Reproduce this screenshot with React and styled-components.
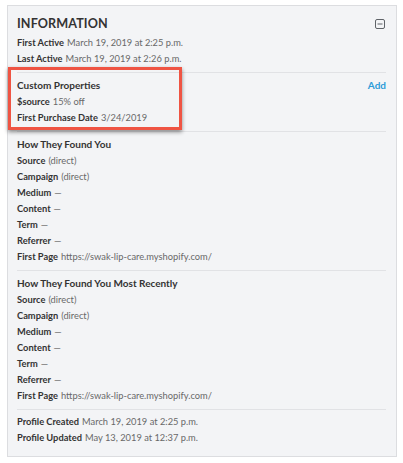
import React from "react";
import styled, { createGlobalStyle } from "styled-components";

const Global = createGlobalStyle`
  html, body {
    margin: 0;
    background: #ffffff;
  }
  body {
    font-family: "Lato", "Liberation Sans", sans-serif;
    -webkit-font-smoothing: antialiased;
  }
`;

const Page = styled.div`
  padding: 5px 6px 0 7px;
`;

const Panel = styled.div`
  position: relative;
  box-sizing: border-box;
  width: 390px;
  height: 452px;
  background: #f3f4f6;
  border: 1px solid #dcdde0;
  padding: 0 10px 0 9px;
`;

const Header = styled.div`
  display: flex;
  align-items: center;
  justify-content: space-between;
  padding-top: 8px;
  height: 20px;
`;

const Title = styled.div`
  font-size: 12.6px;
  font-weight: 700;
  color: #333;
  line-height: 20px;
  letter-spacing: 0.1px;
`;

const Collapse = styled.button`
  display: flex;
  padding: 0;
  margin: 0 1px 0 0;
  border: 0;
  background: none;
  cursor: pointer;
`;

const Section = styled.div`
  padding: ${(p) => (p.top ? "1px 0 5px" : "4px 0 5px")};
  border-top: ${(p) => (p.top ? "none" : "1px solid #e1e2e5")};
`;

const HeadRow = styled.div`
  display: flex;
  justify-content: space-between;
  align-items: baseline;
  height: 17px;
  line-height: 17px;
`;

const Heading = styled.div`
  font-size: 10px;
  font-weight: 700;
  color: #333;
`;

const AddLink = styled.a`
  font-size: 10px;
  font-weight: 700;
  color: #2d9bd8;
  text-decoration: none;
  cursor: pointer;
`;

const Row = styled.div`
  font-size: 9.3px;
  line-height: 16px;
  height: 16px;
  color: #686868;
  white-space: nowrap;
`;

const Label = styled.span`
  font-weight: 700;
  color: #333;
  margin-right: 3px;
`;

const Highlight = styled.div`
  position: absolute;
  left: 0px;
  top: 61px;
  width: 168px;
  height: 57px;
  border: 3px solid #ef5443;
  box-shadow: 0 2px 4px rgba(0, 0, 0, 0.45);
  pointer-events: none;
`;

const source = [
  ["Source", "(direct)"],
  ["Campaign", "(direct)"],
  ["Medium", "—"],
  ["Content", "—"],
  ["Term", "—"],
  ["Referrer", "—"],
  ["First Page", "https://swak-lip-care.myshopify.com/"],
];

function Field({ label, children }) {
  return (
    <Row>
      <Label>{label}</Label>
      {children}
    </Row>
  );
}

function MinusBox() {
  return (
    <svg width="10" height="10" viewBox="0 0 10 10">
      <rect x="0.5" y="0.5" width="9" height="9" rx="1.5" fill="none" stroke="#5f6368" strokeWidth="1" />
      <line x1="2.5" y1="5" x2="7.5" y2="5" stroke="#5f6368" strokeWidth="1" />
    </svg>
  );
}

export default function App() {
  return (
    <Page>
      <Global />
      <Panel>
        <Header>
          <Title>INFORMATION</Title>
          <Collapse aria-label="Collapse">
            <MinusBox />
          </Collapse>
        </Header>
        <Section top>
          <Field label="First Active">March 19, 2019 at 2:25 p.m.</Field>
          <Field label="Last Active">March 19, 2019 at 2:26 p.m.</Field>
        </Section>
        <Section>
          <HeadRow>
            <Heading>Custom Properties</Heading>
            <AddLink>Add</AddLink>
          </HeadRow>
          <Field label="$source">15% off</Field>
          <Field label="First Purchase Date">3/24/2019</Field>
        </Section>
        <Section>
          <HeadRow>
            <Heading>How They Found You</Heading>
          </HeadRow>
          {source.map(([k, v]) => (
            <Field key={k} label={k}>{v}</Field>
          ))}
        </Section>
        <Section>
          <HeadRow>
            <Heading>How They Found You Most Recently</Heading>
          </HeadRow>
          {source.map(([k, v]) => (
            <Field key={k} label={k}>{v}</Field>
          ))}
        </Section>
        <Section>
          <Field label="Profile Created">March 19, 2019 at 2:25 p.m.</Field>
          <Field label="Profile Updated">May 13, 2019 at 12:37 p.m.</Field>
        </Section>
        <Highlight />
      </Panel>
    </Page>
  );
}
